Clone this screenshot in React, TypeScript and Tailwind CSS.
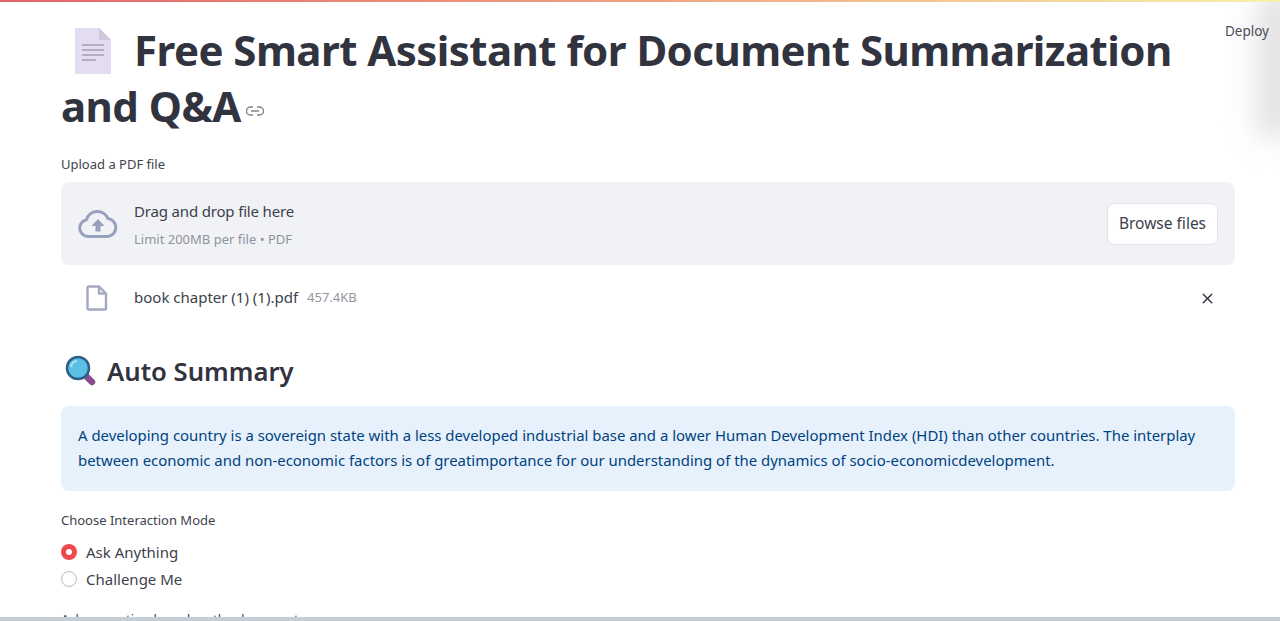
import { X } from 'lucide-react'

const font = { fontFamily: '"Noto Sans", sans-serif' }

function DocEmoji() {
  return (
    <svg width="36" height="46" viewBox="0 0 36 46" className="inline-block align-[-8px] ml-[14px] mr-[23px]">
      <path d="M0 0H24L36 12V46H0Z" fill="#e4dcf1" />
      <path d="M24 0L36 12H24Z" fill="#cfc8dc" />
      <path d="M7 17H29M7 22H29M7 27H29M7 32H21" stroke="#a49cb4" strokeWidth="1.4" />
    </svg>
  )
}

function LinkIcon() {
  return (
    <svg width="18" height="10" viewBox="0 0 18 10" fill="none" stroke="#85858d" strokeWidth="1.4" className="inline-block ml-[5px] align-[6px]">
      <path d="M7 1H4.5a4 4 0 0 0 0 8H7M11 1h2.5a4 4 0 0 1 0 8H11M5 5h8" />
    </svg>
  )
}

function CloudIcon() {
  return (
    <svg width="40" height="28" viewBox="0 0 40 28" fill="none">
      <path d="M10 26.5a8.5 8.5 0 0 1-1.6-16.8A11.5 11.5 0 0 1 30 8.6a9 9 0 0 1-.5 17.9Z" stroke="#97a1bd" strokeWidth="3" strokeLinejoin="round" />
      <path d="M20 9l6.5 7H22.500v5.500h-5V16H13.500Z" fill="#97a1bd" />
    </svg>
  )
}

function FileIcon() {
  return (
    <svg width="22" height="26" viewBox="0 0 22 26" fill="none" stroke="#a3a8c0" strokeWidth="2.400" strokeLinejoin="round">
      <path d="M3 1.500H13L20 8.500V23a1.500 1.500 0 0 1-1.500 1.500H3A1.500 1.500 0 0 1 1.500 23V3A1.500 1.500 0 0 1 3 1.500Z" />
      <path d="M13 1.500V8.500H20" />
    </svg>
  )
}

function MagnifierEmoji() {
  return (
    <svg width="32" height="32" viewBox="0 0 32 32" className="ml-[4px]">
      <path d="M20 20L27 27" stroke="#8a4a92" strokeWidth="6.500" strokeLinecap="round" />
      <circle cx="13" cy="13" r="11" fill="#5cc0e4" stroke="#2d5f86" strokeWidth="2.500" />
      <path d="M6 12a7 7 0 0 1 6-6" stroke="#a5e2f5" strokeWidth="2" fill="none" />
    </svg>
  )
}

export default function App() {
  return (
    <div className="relative h-[621px] w-[1280px] overflow-hidden bg-white text-[#31333f]" style={font}>
      <div className="absolute right-[-16px] top-[-10px] h-[150px] w-[40px] rounded-full bg-[#e2e2e2] blur-[14px]" />
      <div className="absolute inset-x-0 top-0 h-[2px] bg-gradient-to-r from-[#e2636b] via-[#eda27f] to-[#f6f0b0]" />
      <div className="absolute right-[11px] top-[22px] text-[13.500px] leading-[18px] text-[#4b4d58]">Deploy</div>
      <div className="absolute inset-x-0 bottom-0 h-[4px] bg-[#c3ced6]" />

      <main className="w-[1174px] ml-[61px] pt-[22px]">
        <h1 className="text-[42px] leading-[56px] font-bold tracking-[-0.55px]">
          <DocEmoji />
          Free Smart Assistant for Document Summarization and Q&amp;A
          <LinkIcon />
        </h1>

        <div className="mt-[21px] text-[13px] leading-[18px] text-[#40424d]">Upload a PDF file</div>

        <section className="mt-[9px] h-[83px] rounded-lg bg-[#f0f2f6] flex items-center pl-[17px] pr-[17px]">
          <CloudIcon />
          <div className="ml-[16px] flex-1 pt-[2px]">
            <div className="text-[15px] leading-[20px] tracking-[-0.17px] text-[#3d3f4a]">Drag and drop file here</div>
            <div className="mt-[9px] text-[13px] leading-[18px] text-[#8f929d]">Limit 200MB per file • PDF</div>
          </div>
          <button className="h-[42px] w-[111px] rounded-lg border border-[#e2e4e9] bg-white text-[15.500px] text-[#3d3f4a]">Browse files</button>
        </section>

        <div className="mt-[20px] h-[26px] flex items-center pl-[25px] pr-[19px]">
          <FileIcon />
          <span className="ml-[26px] mb-[2px] text-[15px] text-[#3d3f4a]">book chapter (1) (1).pdf</span>
          <span className="ml-[9px] mb-[1px] text-[13px] text-[#94969f]">457.4KB</span>
          <X size={17} strokeWidth={2} className="ml-auto text-[#31333f]" />
        </div>

        <h2 className="mt-[40px] h-[40px] flex items-center text-[25.700px] leading-[40px] font-semibold">
          <MagnifierEmoji />
          <span className="ml-[10px] pt-[2px]">Auto Summary</span>
        </h2>

        <section className="mt-[15px] h-[85px] rounded-lg bg-[#e7f1fb] px-[17px] py-[17px] text-[14.930px] leading-[25px] text-[#004280]">
          A developing country is a sovereign state with a less developed industrial base and a lower Human Development Index (HDI) than other countries. The interplay between economic and non-economic factors is of greatimportance for our understanding of the dynamics of socio-economicdevelopment.
        </section>

        <div className="mt-[20px] text-[13px] leading-[18px] text-[#40424d]">Choose Interaction Mode</div>

        <div className="mt-[12px] flex flex-col gap-[5px] text-[15px] leading-[22px] text-[#40424d]">
          <label className="flex items-center gap-[9px]">
            <span className="flex h-4 w-4 items-center justify-center rounded-full bg-[#f0484e]">
              <span className="h-[6px] w-[6px] rounded-full bg-white" />
            </span>
            Ask Anything
          </label>
          <label className="flex items-center gap-[9px]">
            <span className="h-4 w-4 rounded-full border border-[#b9bcc4] bg-white" />
            Challenge Me
          </label>
        </div>

        <div className="mt-[20px] text-[13px] leading-[18px] text-[#40424d]">Ask a question based on the document:</div>
      </main>
    </div>
  )
}
